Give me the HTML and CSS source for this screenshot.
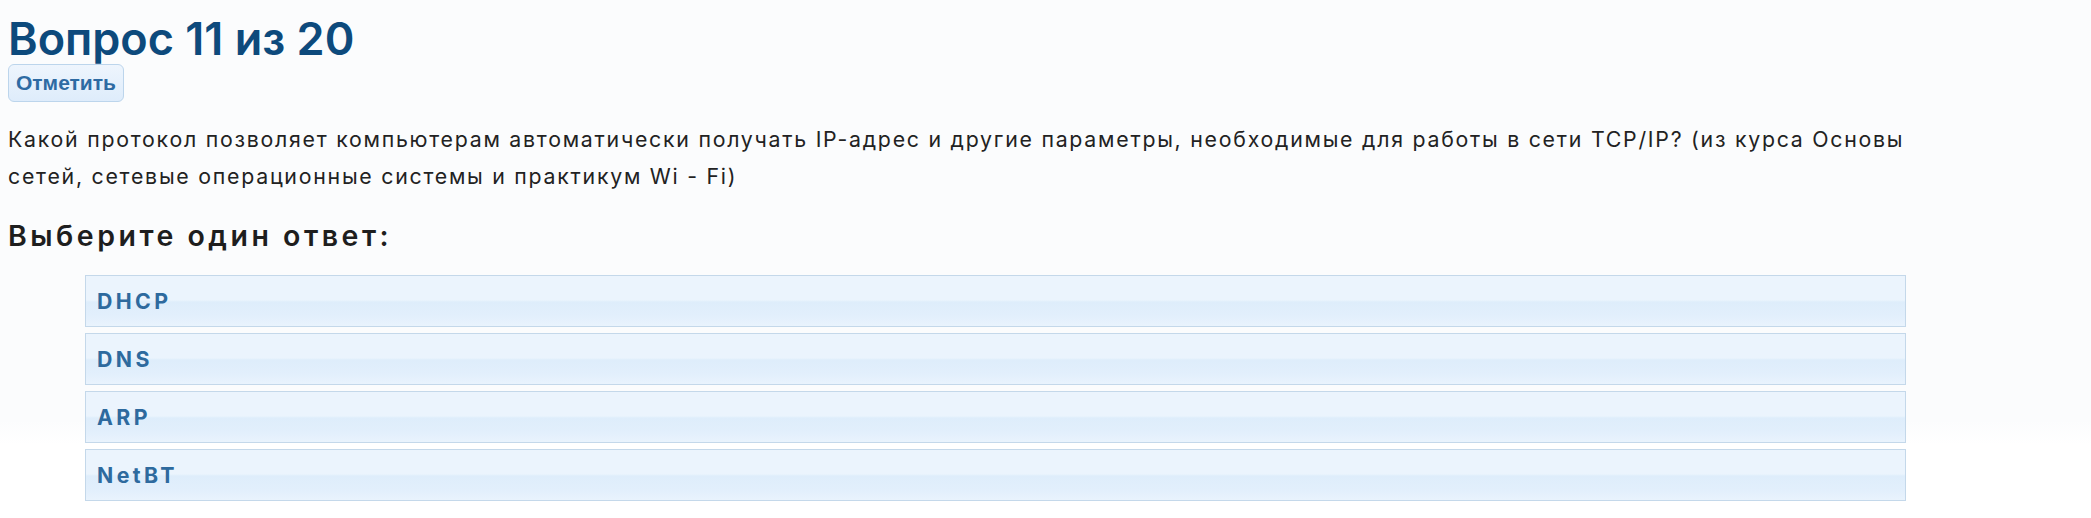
FILE: index.html
```html
<!DOCTYPE html>
<html lang="ru">
<head>
  <meta charset="UTF-8">
  <meta name="viewport" content="width=device-width, initial-scale=1.0">
  <title>Вопрос 11 из 20</title>
  <link rel="stylesheet" href="styles.css">
</head>
<body>
  <main class="quiz">
    <h2 class="quiz-title">Вопрос 11 из 20</h2>
    <button class="flag-btn" type="button">Отметить</button>

    <p class="question">Какой протокол позволяет компьютерам автоматически получать IP-адрес и другие параметры, необходимые для работы в сети TCP/IP? (из курса Основы сетей, сетевые операционные системы и практикум Wi - Fi)</p>

    <h3 class="answers-title">Выберите один ответ:</h3>
    <ul class="answers">
      <li class="answer">DHCP</li>
      <li class="answer">DNS</li>
      <li class="answer">ARP</li>
      <li class="answer">NetBT</li>
    </ul>
  </main>
</body>
</html>
```

FILE: styles.css
```css
html {
  background: linear-gradient(#fbfcfd 0, #fbfcfd 420px, #fff 445px);
  min-height: 100%;
}
body {
  margin: 8px;
  font-family: Inter, "Noto Sans", sans-serif;
  color: #222;
}
.quiz-title {
  margin: 6px 0 0;
  font-size: 45px;
  line-height: 50px;
  font-weight: 600;
  color: #0d4a7c;
}
.flag-btn {
  display: block;
  height: 38px;
  padding: 0 7px;
  font-family: "Liberation Sans", Arial, sans-serif;
  font-size: 21px;
  font-weight: bold;
  color: #2e6ba3;
  background: linear-gradient(#eef5fd, #deecfb);
  border: 1px solid #bcd5ec;
  border-radius: 6px;
  cursor: pointer;
}
.question {
  margin: 19px 0 0;
  max-width: 1920px;
  font-size: 21.3px;
  line-height: 37px;
  letter-spacing: 1.75px;
}
.answers-title {
  margin: 24px 0 0;
  font-size: 28.5px;
  line-height: 34px;
  font-weight: 600;
  letter-spacing: 3.5px;
  color: #1e1e1e;
}
.answers {
  list-style: none;
  margin: 22px 177px 0 77px;
  padding: 0;
}
.answer {
  height: 50px;
  margin-bottom: 6px;
  padding: 0 11px;
  display: flex;
  align-items: center;
  font-size: 21.3px;
  font-weight: 700;
  letter-spacing: 3.4px;
  color: #2e6a9e;
  border: 1px solid #c4d8ea;
  background: linear-gradient(#ebf4fd 0, #ebf4fd 48%, #deedfb 52%, #e2effc 80%, #e9f3fd 100%);
}
```
